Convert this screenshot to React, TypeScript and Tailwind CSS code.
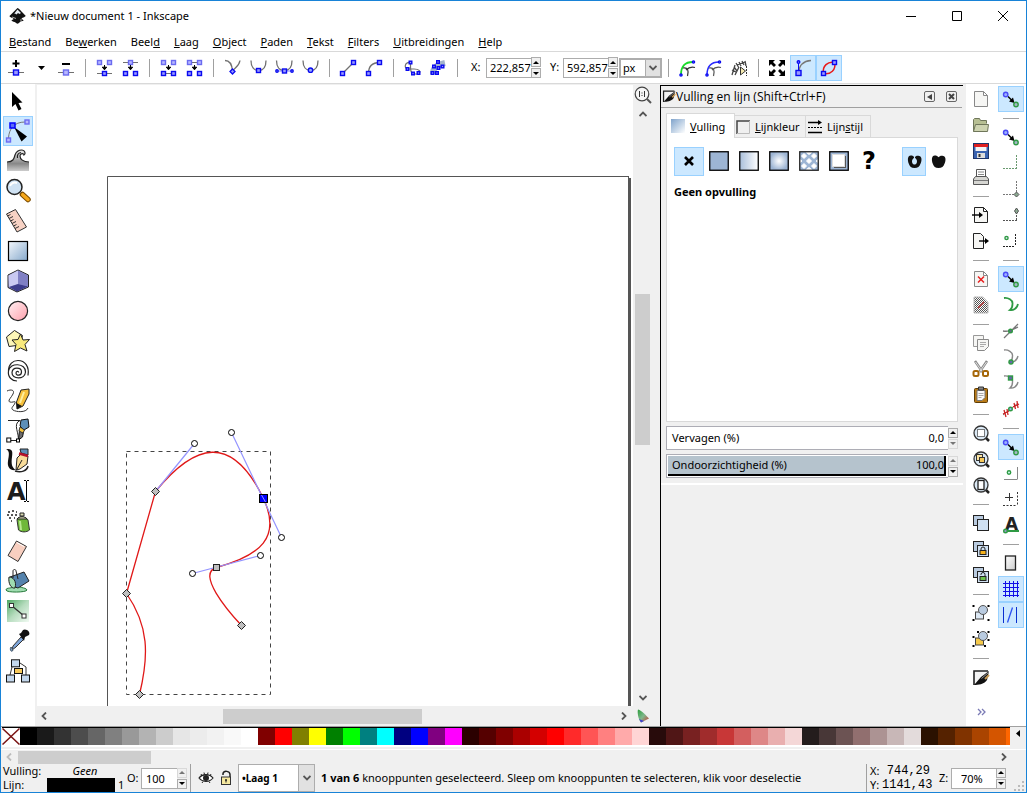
import React from "react";

type P = { children?: React.ReactNode };

const Svg = ({ children }: P) => (
  <svg width="24" height="24" viewBox="0 0 24 24" fill="none" aria-hidden="true" className="shrink-0 overflow-visible">
    {children}
  </svg>
);

const Node = ({ x, y, light, s = 4 }: { x: number; y: number; light?: boolean; s?: number }) => (
  <rect
    x={x - s / 2}
    y={y - s / 2}
    width={s}
    height={s}
    fill={light ? "#b8b8ff" : "#9a9aff"}
    stroke={light ? "#6b6bf0" : "#0a0af0"}
    strokeWidth="1.4"
  />
);

const Dot = ({ x, y, c = "#0a0af0", f = "#9ab0ff", r = 2.2 }: { x: number; y: number; c?: string; f?: string; r?: number }) => (
  <circle cx={x} cy={y} r={r} fill={f} stroke={c} strokeWidth="1.4" />
);

const G = "#2f9a44";
const gr = "#707070";

const Down = () => <path d="M12.5 9v4M10.3 11.2h4.4l-2.2 2.6z" stroke="#000" strokeWidth="1" fill="#000" />;

/* ---------- node-editing icons ---------- */

const edit = {
  add: (
    <Svg>
      <path d="M4 16.5h16" stroke={gr} />
      <path d="M12 4v7M8.5 7.5h7" stroke="#000" strokeWidth="2" />
      <Node x={12} y={16.5} s={5} />
    </Svg>
  ),
  remove: (
    <Svg>
      <path d="M4 16.5h16" stroke={gr} />
      <path d="M8 8h8" stroke="#000" strokeWidth="2" />
      <Node x={12} y={16.5} s={5} light />
    </Svg>
  ),
  join: (
    <Svg>
      <path d="M5 17.5h15" stroke={gr} />
      <Node x={7.5} y={6.5} light />
      <Node x={17.5} y={6.5} light />
      <Node x={12.5} y={17.5} />
      <Down />
    </Svg>
  ),
  breakPath: (
    <Svg>
      <path d="M5 6.5h15" stroke={gr} />
      <Node x={12.5} y={6.5} light />
      <Node x={7.5} y={17.5} />
      <Node x={17.5} y={17.5} />
      <Down />
    </Svg>
  ),
  joinSeg: (
    <Svg>
      <path d="M7.5 17.5h10" stroke={gr} />
      <Node x={7.5} y={6.5} light />
      <Node x={17.5} y={6.5} light />
      <Node x={7.5} y={17.5} />
      <Node x={17.5} y={17.5} />
      <Down />
    </Svg>
  ),
  delSeg: (
    <Svg>
      <path d="M7.5 6.5h10" stroke={gr} />
      <Node x={7.5} y={6.5} light />
      <Node x={17.5} y={6.5} light />
      <Node x={7.5} y={17.5} />
      <Node x={17.5} y={17.5} />
      <Down />
    </Svg>
  ),
  cusp: (
    <Svg>
      <path d="M5 4.5C10 4.5 12 9 12.5 15 14 12 19 11 20 4.5" stroke={gr} strokeWidth="1.3" />
      <path d="M12.5 13l2.5 2.5-2.5 2.5-2.5-2.5z" fill="#9a9aff" stroke="#0a0af0" strokeWidth="1.3" />
    </Svg>
  ),
  smooth: (
    <Svg>
      <path d="M5 4.5C5 11 8 14.5 12.5 14.5S20 11 20 4.5" stroke={gr} strokeWidth="1.3" />
      <Node x={12.5} y={14.5} />
    </Svg>
  ),
  symmetric: (
    <Svg>
      <path d="M4.5 4.5C4.5 10 7 14.5 12.5 14.5S20 10 20 4.5" stroke={gr} strokeWidth="1.3" />
      <path d="M5 15h15" stroke="#7a7aff" />
      <Node x={12.5} y={15} />
      <Dot x={5} y={15} r={1.2} />
      <Dot x={20} y={15} r={1.2} />
    </Svg>
  ),
  auto: (
    <Svg>
      <path d="M5 4.5C5 11 8 14.5 12.5 14.5S20 11 20 4.5" stroke={gr} strokeWidth="1.3" />
      <Dot x={12.5} y={14.2} />
    </Svg>
  ),
  line: (
    <Svg>
      <path d="M6.5 17.5l11-11" stroke={gr} strokeWidth="1.3" />
      <Node x={6.5} y={17.5} />
      <Node x={17.5} y={6.5} />
    </Svg>
  ),
  curve: (
    <Svg>
      <path d="M6.5 17.5c0-7 4-11 11-11" stroke={gr} strokeWidth="1.3" />
      <Node x={6.5} y={17.5} />
      <Node x={17.5} y={6.5} />
    </Svg>
  ),
  objToPath: (
    <Svg>
      <path d="M10.5 6.5C4 6 4 13 8 13h6c5 0 7 2 5 5h-4c-5 0-4.5-5-4.5-11.5z" stroke={gr} strokeWidth="1.2" />
      <Node x={10.5} y={6.5} s={2.6} />
      <Node x={7.5} y={13} s={2.6} />
      <Node x={13} y={17.5} s={2.6} />
      <Node x={18.5} y={17} s={2.6} />
    </Svg>
  ),
  strokeToPath: (
    <Svg>
      <path d="M7 18c0-6 3-9 12-11" stroke="#a3b4cc" strokeWidth="6" />
      <Node x={12} y={6} s={2.6} />
      <Node x={8} y={10.5} s={2.6} />
      <Node x={6.5} y={17} s={2.6} />
      <Node x={11} y={17} s={2.6} />
      <Node x={12.5} y={12} s={2.6} />
      <Node x={16.5} y={10.5} s={2.6} />
    </Svg>
  ),
  next: (
    <Svg>
      <path d="M6 19C6 10 10 6 18 6" stroke="#1bdc2b" strokeWidth="1.8" />
      <path d="M8 12c5-1 6 3 4.5 8M11 14c3-3 5-3.5 9-2.5" stroke="#333" strokeWidth="1.2" />
      <Dot x={6} y={19} r={1.1} />
      <Dot x={18.5} y={6} r={1.1} />
    </Svg>
  ),
  outline: (
    <Svg>
      <path d="M6 19C6 10 10 6 18 6" stroke="#2a2aff" strokeWidth="1.5" />
      <path d="M8 12c5-1 6 3 4.5 8M11 14c3-3 5-3.5 9-2.5" stroke="#555" strokeWidth="1.2" />
      <Dot x={6} y={19} r={1.1} />
      <Dot x={18.5} y={6} r={1.1} />
    </Svg>
  ),
  mask: (
    <Svg>
      <path d="M5 19l3-10M7 11l3 4M9 7l3 5M12 6l2 4M15 5l2 4M8 19l4-8M18 5l1 5M5 14l4 2M10 9l8-3" stroke="#444" strokeWidth="1.3" />
      <path d="M13.5 11v8l5-4z" fill="#f3e8b0" stroke="#333" />
      <path d="M19.5 10v10" stroke="#333" strokeDasharray="2 1" />
    </Svg>
  ),
  transform: (
    <Svg>
      <path
        d="M4 4h6L8 6l3 3-2 2-3-3-2 2zM20 4h-6l2 2-3 3 2 2 3-3 2 2zM4 20h6l-2-2 3-3-2-2-3 3-2-2zM20 20h-6l2-2-3-3 2-2 3 3 2-2z"
        fill="#000"
      />
    </Svg>
  ),
  handles: (
    <Svg>
      <path d="M7.5 17C8 10 12 5 20 4.5" stroke="#777" strokeWidth="1.3" />
      <path d="M7.5 17V6" stroke="#0a0af0" />
      <Dot x={7.5} y={6} r={1.3} />
      <Node x={7.5} y={17} s={5} />
    </Svg>
  ),
  pathOutline: (
    <Svg>
      <path d="M6.5 17.5C5 10 11 5 17.5 6.5c2 7-4 12.5-11 11z" stroke="#e81a1a" strokeWidth="1.5" />
      <Node x={6.5} y={17.5} />
      <Node x={17.5} y={6.5} />
    </Svg>
  ),
};

/* ---------- toolbox ---------- */

const toolbox: [string, React.ReactNode][] = [
  ["Selecteren", <Svg><path d="M6 3v15l3.5-3 3 6.5 3-1.5-3-6 4-.5z" fill="#000" /></Svg>],
  [
    "Knooppunten",
    <Svg>
      <path d="M2.5 19C3 10 8 3 19 3" stroke="#777" />
      <path d="M8 8l13 9.5-5.5 5z" fill="#000" />
      <Node x={2.5} y={21} light />
      <Node x={21} y={3} light />
      <rect x="4" y="4" width="5" height="5" fill="#5b6cf5" stroke="#00f" strokeWidth="1.5" />
    </Svg>,
  ],
  [
    "Boetseren",
    <Svg>
      <defs>
        <linearGradient id="wave" x1="0" y1="0" x2="0" y2="1">
          <stop stopColor="#eee" />
          <stop offset=".65" stopColor="#888" />
          <stop offset="1" stopColor="#ccc" />
        </linearGradient>
      </defs>
      <path d="M1 22v-9c6 0 7-3 8-7 1-3 4-5 7-5 3 0 4 3 2 5-1-2-4-1-4 1 0 3 3 6 9 6v9z" fill="url(#wave)" />
      <path d="M1 13c6 0 7-3 8-7 1-3 4-5 7-5s4 4 2 5c0-2-4-2-4 1 0 3 3 6 9 6M11.5 9c-.5-3 1-5 3.5-5.5" stroke="#222" strokeWidth="1.2" />
    </Svg>,
  ],
  [
    "Zoomen",
    <Svg>
      <path d="M14.5 14l2.5 2.5" stroke="#888" strokeWidth="3" />
      <path d="M16.5 15.5L22 20.5" stroke="#7a4b00" strokeWidth="5.5" strokeLinecap="round" />
      <path d="M16.7 15.7L22 20.5" stroke="#f5a81c" strokeWidth="3.5" strokeLinecap="round" />
      <circle cx="8.5" cy="8" r="7.5" fill="#cfe2f3" stroke="#222" strokeWidth="1.5" />
      <path d="M4 7c1-3 4-4 7-3" stroke="#fff" strokeWidth="2" />
    </Svg>,
  ],
  [
    "Meten",
    <Svg>
      <path d="M.5 5l9-4.5L20.5 18l-9.5 5z" fill="#f7d2c4" stroke="#333" />
      <path d="M1.5 7l3-1.5M3 9.5l4-2M4.5 12l3-1.5M6 14.5l4-2M7.5 17l3-1.5M9 19.5l4-2" stroke="#333" />
    </Svg>,
  ],
  [
    "Rechthoek",
    <Svg>
      <defs>
        <linearGradient id="bl" x1="0" y1="0" x2="1" y2="1">
          <stop stopColor="#f4f8fc" />
          <stop offset="1" stopColor="#86a9cc" />
        </linearGradient>
      </defs>
      <rect x="2.5" y="2.5" width="19" height="19" fill="url(#bl)" stroke="#000" strokeWidth="1.2" />
    </Svg>,
  ],
  [
    "3D-kubus",
    <Svg>
      <path d="M2 6L12 1l10.5 5V18L11 23 2 18.5z" fill="#9a9ad6" stroke="#222" />
      <path d="M2.5 6.5L12 1.5V15l-9 3z" fill="#c9c9f2" />
      <path d="M12 1.5L22 6.5V17.5L12 15z" fill="#8080c4" />
      <path d="M3 18l9-3 10 2.5L11 22.5z" fill="#3c3c8c" />
    </Svg>,
  ],
  [
    "Cirkel",
    <Svg>
      <defs>
        <linearGradient id="pk" x1="0" y1="0" x2="1" y2="1">
          <stop stopColor="#fff1f3" />
          <stop offset="1" stopColor="#ffa0ac" />
        </linearGradient>
      </defs>
      <circle cx="12" cy="12" r="9.6" fill="url(#pk)" stroke="#222" strokeWidth="1.2" />
    </Svg>,
  ],
  [
    "Ster",
    <Svg>
      <path d="M.5 8l8-6.5 8 5L14 16l-11 1.5z" fill="#fdf6b8" stroke="#222" />
      <path d="M14.5 5l2.5 6 6.5-.5-4.5 5 2 6.5-6.5-3-6 3.5 1.500-7-4-4.500 6-.5z" fill="#f9ea7c" stroke="#222" />
    </Svg>,
  ],
  [
    "Spiraal",
    <Svg>
      <path
        d="M12.5 13.5c.5-1.500-2.500-1.500-2.500.5 0 3 5.500 3 5.500-1 0-5-9-5.500-9.500.5-.5 7 13 7.500 13.500-.5C20 4 4 3 2.500 12 1.500 18 6 22 11 22M2.500 12C2.500 5 7 1.500 12 1.500c7 0 11.500 6 10 15"
        stroke="#222"
        strokeWidth="1.2"
      />
    </Svg>,
  ],
  [
    "Potlood",
    <Svg>
      <path d="M1 2c4-2 8-1 6 3S1 12 4 13s6-2 5 1-5 5-2 7 13 3 15-2" stroke="#333" />
      <path d="M11 20l-.5-7L15 1l8-1v5l-6 12z" fill="#f7c13c" stroke="#222" />
      <path d="M14 14L18 3" stroke="#fff0a0" strokeWidth="2" />
      <path d="M11 20l-.5-6 5.500 3z" fill="#111" />
    </Svg>,
  ],
  [
    "Bezier",
    <Svg>
      <path d="M2 1.5h12C6 5 14 15 12 21.5H3" stroke="#222" />
      <path d="M15 1l7-1 1 8-5 3-4-4z" fill="#5d8fb8" stroke="#111" />
      <path d="M13.5 11l4 2-1 5-4 3z" fill="#6b6b6b" stroke="#111" />
      <path d="M14 8l4.5 3-1.500 3-4-2z" fill="#f5c33b" stroke="#333" />
      <rect x=".8" y="19" width="4" height="4" fill="#fff" stroke="#000" />
      <rect x="10.5" y="20" width="3" height="3" fill="#fff" stroke="#000" />
    </Svg>,
  ],
  [
    "Kalligrafie",
    <Svg>
      <path d="M0 0c6 0 7 1 6 8s0 11 4 13c-6 1-9-3-8-9S4 2 0 0z" fill="#111" />
      <path d="M9 22c6 2 12 0 13-5" stroke="#222" strokeWidth="1.5" />
      <path d="M10 21l1-12 4-4 7 2-1 8-7 5z" fill="#f8dc9a" stroke="#222" />
      <path d="M10.5 21L16 11" stroke="#222" />
      <path d="M14 0h8v6l-7-2z" fill="#5d8fb8" stroke="#222" />
      <path d="M13 4.5l9 2.5" stroke="#b3122b" strokeWidth="2.5" />
    </Svg>,
  ],
  [
    "Tekst",
    <Svg>
      <text x="1" y="21" fontFamily="DejaVu Sans" fontWeight="700" fontSize="24" fill="#1c1c1c">A</text>
      <path d="M20.5 2v20M18 1.5h2M21 1.5h2M18 22.5h2M21 22.5h2" stroke="#000" />
    </Svg>,
  ],
  [
    "Spuitbus",
    <Svg>
      <path d="M2 3h2M6 2h2M10 3h1M1 6h2M5 6h2M9 6h2M3 9h2M8 9h1M5 12h1" stroke="#222" strokeWidth="1.5" />
      <path d="M11 11c0-4 9-4 11 0l1.5 10c-3 2.5-8 2.5-11 0z" fill="#6fb83a" stroke="#333" />
      <path d="M14 12l1 9" stroke="#b8e890" strokeWidth="2" />
      <path d="M11 10c2-3 8-3 10 0zM14 4h4v3h-4z" fill="#d8d8b0" stroke="#222" />
    </Svg>,
  ],
  [
    "Gom",
    <Svg>
      <path d="M10.5 2l10 5.5L12 22.5 2 16.5z" fill="#f8cfc0" stroke="#333" />
      <path d="M10.8 3.5L18 7.5" stroke="#fff" />
    </Svg>,
  ],
  [
    "Vullen",
    <Svg>
      <path d="M0 21c0-3 7-1 8-4l4-1c-1 3 8 2 9 5 0 2.5-21 3-21 0z" fill="#9fdcb0" stroke="#287a3c" />
      <path d="M4 8l14-5 5 9-11 7-6-2z" fill="#5583ad" stroke="#222" />
      <path d="M3 8c4 0 8 4 6 11-4 1-7-5-6-11z" fill="#9fdcb0" stroke="#222" />
      <path d="M7 9V2c0-2 3-2 3 0l2 8" stroke="#222" />
    </Svg>,
  ],
  [
    "Kleurverloop",
    <Svg>
      <defs>
        <linearGradient id="gn" x1="0" y1="0" x2="1" y2="1">
          <stop stopColor="#4ea862" />
          <stop offset=".5" stopColor="#b6dcbe" />
          <stop offset="1" stopColor="#f0faf2" />
        </linearGradient>
      </defs>
      <rect x="1" y="1" width="22" height="22" fill="url(#gn)" />
      <path d="M5.5 6.5l12 10" stroke="#333" strokeWidth="1.3" />
      <rect x="3.5" y="4.5" width="4" height="4" fill="#fff" stroke="#333" />
      <rect x="16" y="15" width="4" height="4" fill="#fff" stroke="#333" />
    </Svg>,
  ],
  [
    "Pipet",
    <Svg>
      <path d="M15 8L7 17l-1 4 4-3 8-8z" fill="#7da4d8" stroke="#333" />
      <path d="M13 5l2-1 2-3c3-2 8 2 6 5l-4 2-1 4z" fill="#111" />
      <path d="M5 18c-2 3 1 6 2 3z" fill="#86a9cc" stroke="#456" />
    </Svg>,
  ],
  [
    "Verbinden",
    <Svg>
      <path d="M6 8L4 16M14 4l6 4v8" stroke="#333" />
      <rect x="5.5" y=".8" width="8" height="7" fill="#c3d7ec" stroke="#111" />
      <rect x=".5" y="16" width="8" height="7" fill="#c3d7ec" stroke="#111" />
      <rect x="15.5" y="16" width="8" height="7" fill="#c3d7ec" stroke="#111" />
      <rect x="8.5" y="9.5" width="8" height="5" fill="#f7c95a" stroke="#111" />
    </Svg>,
  ],
];

/* ---------- command bar ---------- */

const Doc = ({ c = "#888", f = "#f6f6f4" }: { c?: string; f?: string }) => (
  <path d="M5.5 4.5h9l4 4v11h-13zM14.5 4.5v4h4" fill={f} stroke={c} />
);
const Lens = ({ children }: P) => (
  <Svg>
    <path d="M16 16l4 4" stroke="#222" strokeWidth="2.5" />
    <circle cx="12" cy="12" r="7" fill="#dbe9f5" stroke="#333" strokeWidth="1.3" />
    {children}
  </Svg>
);
const Two = ({ children }: P) => (
  <Svg>
    <rect x="4.5" y="4.5" width="10" height="10" fill="#b9cbe0" stroke="#222" />
    <rect x="8.5" y="8.5" width="11" height="11" fill="#cfe0f2" stroke="#222" />
    {children}
  </Svg>
);

const FillGlyph = () => (
  <>
    <path d="M5 6h14L5 19z" fill="#f4f4f4" />
    <path d="M5 20V6h14" stroke="#222" strokeWidth="1.6" />
    <path d="M20 6L12 12 5 20c4 0 10-.5 13-5z" fill="#111" />
    <path d="M12.5 13.5l7-6" stroke="#999" />
    <path d="M16 14l4-4" stroke="#c79a55" strokeWidth="2" />
  </>
);

const commands: ([string, React.ReactNode] | null)[] = [
  ["Nieuw", <Svg><Doc /></Svg>],
  [
    "Openen",
    <Svg>
      <path d="M4.5 18.5v-12l1-1h5l1 2h6v3" fill="#b7bf93" stroke="#6f765a" />
      <path d="M4.5 18.5h14l1-7h-13z" fill="#cdd3b0" stroke="#6f765a" />
    </Svg>,
  ],
  [
    "Opslaan",
    <Svg>
      <rect x="4.5" y="4.5" width="15" height="15" fill="#3a63b0" stroke="#1e3468" />
      <path d="M5 5h14v3H5z" fill="#e02020" />
      <path d="M6.5 8h11v4h-11z" fill="#f4f4f4" />
      <path d="M8 14h8v5H8z" fill="#ddd" />
      <path d="M9.5 15h2v3h-2z" fill="#333" />
    </Svg>,
  ],
  [
    "Afdrukken",
    <Svg>
      <path d="M7.5 12V4.5h9V12" fill="#fff" stroke="#555" />
      <path d="M9 7h6M9 9.5h6" stroke="#888" />
      <path d="M4.5 19.5V14l2-2.5h11l2 2.5v5.5z" fill="#d6d6d2" stroke="#555" />
      <path d="M5 15.5h14" stroke="#777" />
    </Svg>,
  ],
  null,
  ["Importeren", <Svg><Doc c="#222" /><path d="M3 12h8" stroke="#000" strokeWidth="1.4" /><path d="M10 9l4 3-4 3z" fill="#000" /></Svg>],
  ["Exporteren", <Svg><path d="M4.5 4.5h7l3 3v12h-10z" fill="#f6f6f4" stroke="#222" /><path d="M10 12h7" stroke="#000" strokeWidth="1.4" /><path d="M16 9l4 3-4 3z" fill="#000" /></Svg>],
  null,
  ["Ongedaan maken", <Svg><Doc /><path d="M9 9.5l6 6M15 9.5l-6 6" stroke="#e82020" strokeWidth="1.5" /></Svg>],
  [
    "Opnieuw",
    <Svg>
      <defs>
        <pattern id="chk" width="2" height="2" patternUnits="userSpaceOnUse">
          <path d="M0 0h1v1H0zM1 1h1v1H1z" fill="#555" />
        </pattern>
      </defs>
      <path d="M5 4h9l5 5v11H5z" fill="url(#chk)" stroke="#bbb" />
      <path d="M9 15l6-6" stroke="#c44" strokeWidth="1.3" />
    </Svg>,
  ],
  null,
  [
    "Kopiëren",
    <Svg>
      <path d="M4.5 4.5h10v11h-10z" fill="#f6f6f4" stroke="#999" />
      <path d="M8.5 8.5h11v7l-4 4h-7z" fill="#f6f6f4" stroke="#888" />
      <path d="M11 11.5h6M11 13.5h6M11 15.5h4" stroke="#aaa" />
    </Svg>,
  ],
  [
    "Knippen",
    <Svg>
      <path d="M6 4l7.5 11M18 4l-7.5 11" stroke="#888" strokeWidth="2.5" />
      <path d="M6.5 5l7 10M17.5 5l-7 10" stroke="#ddd" />
      <rect x="4.5" y="14" width="5" height="5" rx="1.5" stroke="#a5670a" strokeWidth="2" />
      <rect x="14" y="14" width="5" height="5" rx="1.5" stroke="#a5670a" strokeWidth="2" />
    </Svg>,
  ],
  [
    "Plakken",
    <Svg>
      <rect x="5.5" y="5.5" width="13" height="14" rx="1" fill="#b97a16" stroke="#5d3c06" />
      <path d="M8 7.5h8v7l-3 3H8z" fill="#fafafa" stroke="#777" />
      <path d="M9.5 4h5v3h-5z" fill="#888" stroke="#333" />
      <path d="M9.5 10.5h5M9.5 12.5h5M9.5 14.5h3" stroke="#aaa" />
    </Svg>,
  ],
  null,
  ["Zoom selectie", <Lens><rect x="8.5" y="8.5" width="7" height="7" fill="#fff" stroke="#000" strokeDasharray="1 1" /></Lens>],
  ["Zoom tekening", <Lens><rect x="7.5" y="7.5" width="6" height="6" fill="#fbe3a0" stroke="#333" /><rect x="10.5" y="10.5" width="5" height="5" fill="#f7c95a" stroke="#333" /></Lens>],
  ["Zoom pagina", <Lens><rect x="9" y="7.5" width="6" height="9" fill="#fff" stroke="#222" strokeWidth="1.3" /></Lens>],
  null,
  ["Dupliceren", <Two />],
  ["Klonen", <Two><path d="M12 13.5V12a2 2 0 0 1 4 0v1.5" stroke="#222" /><rect x="11" y="13.5" width="6" height="4" fill="#f5b21c" stroke="#222" /></Two>],
  ["Ontklonen", <Two><path d="M12 12v-.5a2 2 0 0 1 4 0v2" stroke="#222" /><rect x="11" y="13.5" width="6" height="4" fill="#6cc04a" stroke="#222" /></Two>],
  null,
  [
    "Groeperen",
    <Svg>
      <path d="M3.5 4h2v2h-2zM18.5 4h2v2h-2zM3.5 18h2v2h-2zM18.5 18h2v2h-2z" fill="#000" />
      <rect x="6.5" y="11" width="8" height="7" fill="#dce8f4" stroke="#444" />
      <circle cx="14" cy="9" r="4.5" fill="#b9cbe0" stroke="#555" />
    </Svg>,
  ],
  [
    "Degroeperen",
    <Svg>
      <rect x="6.5" y="11" width="8" height="7" fill="#f5c94a" stroke="#444" />
      <circle cx="14" cy="9" r="4.5" fill="#b9cbe0" stroke="#555" />
      <path d="M3.5 9h2v2h-2zM18.5 4h2v2h-2zM3.5 18h2v2h-2zM18.5 12h2v2h-2zM8 4h2v2H8zM15 18h2v2h-2z" fill="#000" />
    </Svg>,
  ],
  null,
  ["Vulling en lijn", <Svg><FillGlyph /></Svg>],
];

/* ---------- snap bar ---------- */

const Link = () => (
  <Svg>
    <path d="M9 9.5l4 4" stroke="#000" strokeWidth="1.5" />
    <path d="M15.5 16l-5.5-1.5 4-4z" fill="#000" />
    <Dot x={6.7} y={7.5} c="#4a4af5" />
    <Dot x={17} y={17.5} c={G} f="#a5b8c8" />
  </Svg>
);
const ARC = "M5 5c4-.5 9 2 8.5 6 0 3-1 5-2.5 6 3 .5 7-1 8-6";
const Arc = () => <path d={ARC} stroke="#888" strokeWidth="1.4" />;

const snaps: ([string, React.ReactNode, boolean?] | null)[] = [
  ["Kleven", <Link />, true],
  null,
  ["Omvattend vak", <Link />],
  ["Randen", <Svg><path d="M4 17.5h14M17.5 4v13" stroke="#6a9a70" strokeDasharray="2 1" /></Svg>],
  ["Hoeken", <Svg><path d="M4 17.5h14M17.5 4v13" stroke="#777" strokeDasharray="2 1" /><path d="M17.5 15l2.5 2.5-2.5 2.5-2.5-2.5z" fill="#8aa890" stroke="#555" /></Svg>],
  ["Randmidden", <Svg><path d="M4 17.5h14M17.5 6v11" stroke="#555" strokeDasharray="2 1" /><path d="M17.5 5l2 3-2 3-2-3z" fill="#8aa890" stroke="#555" /></Svg>],
  ["Middelpunt", <Svg><path d="M4 17.5h12M16.5 5v12" stroke="#222" strokeDasharray="2 1" /><Dot x={7.5} y={9} c={G} f="#cdd" r={1.6} /></Svg>],
  null,
  ["Knooppunten", <Link />, true],
  ["Paden", <Svg><path d={ARC} stroke={G} strokeWidth="1.8" /></Svg>],
  ["Snijpunten", <Svg><path d="M5 19L19 5M4 12c6 1 9-1 15-4" stroke="#777" strokeWidth="1.3" /><Dot x={11.5} y={12} c={G} f="#668" r={1.8} /></Svg>],
  ["Hoekknooppunten", <Svg><Arc /><Dot x={12} y={17} c={G} f="#66a" r={2} /></Svg>],
  ["Afgevlakt", <Svg><Arc /><rect x="9.5" y="5" width="4" height="4" fill="#66a" stroke={G} strokeWidth="1.4" /></Svg>],
  ["Lijnmiddens", <Svg><path d="M4 18l15-12" stroke="#777" /><path d="M5 13l2 7M8 12l1 6M15 6l1.5 6M18 4l1 7M4 17l6-3M14 10l6-3" stroke="#c22" strokeWidth="1.3" /><Dot x={11.5} y={12} c={G} r={1.8} /></Svg>],
  null,
  ["Andere", <Link />, true],
  ["Objectmidden", <Svg><path d="M5 18.5h13M18.5 6v12.5" stroke="#888" /><Dot x={10} y={11.5} c={G} f="#cfe" r={1.7} /></Svg>],
  ["Draaipunt", <Svg><path d="M6 10.5h8M10.5 6v8" stroke="#333" /><path d="M4 18.5h13M18.5 5v13" stroke="#333" strokeDasharray="2 1.5" /></Svg>],
  [
    "Tekstbasislijn",
    <Svg>
      <path d="M6 18h14" stroke={G} strokeWidth="2" />
      <text x="6" y="17" fontFamily="DejaVu Sans" fontWeight="700" fontSize="17" fill="#222">A</text>
      <Dot x={6.5} y={18} c={G} f="#99c" r={1.8} />
    </Svg>,
  ],
  null,
  [
    "Pagina",
    <Svg>
      <defs>
        <linearGradient id="pg" x1="0" y1="0" x2="1" y2="1">
          <stop stopColor="#fff" />
          <stop offset="1" stopColor="#ccc" />
        </linearGradient>
      </defs>
      <rect x="6.5" y="5" width="10" height="14" fill="url(#pg)" stroke="#222" strokeWidth="1.3" />
    </Svg>,
  ],
  ["Raster", <Svg><path d="M6.5 4v16M10.5 4v16M14.5 4v16M18.5 4v16M4 6.5h16M4 10.5h16M4 14.5h16M4 18.5h16" stroke="#1010e8" /></Svg>, true],
  ["Hulplijnen", <Svg><path d="M4.5 4v16M17.5 4v16" stroke="#0a2fd0" /><path d="M8.5 19.5l5-15" stroke="#2a4ff0" strokeWidth="1.3" /></Svg>, true],
];

const swatches =
  "#000000 #1a1a1a #333333 #4d4d4d #666666 #808080 #999999 #b3b3b3 #cccccc #e6e6e6 #ececec #f2f2f2 #f9f9f9 #ffffff #800000 #ff0000 #808000 #ffff00 #008000 #00ff00 #008080 #00ffff #000080 #0000ff #800080 #ff00ff #2b0000 #550000 #800000 #aa0000 #d40000 #ff0000 #ff2a2a #ff5555 #ff8080 #ffaaaa #ffd5d5 #280b0b #501616 #782121 #a02c2c #c83737 #d35f5f #de8787 #e9afaf #f4d7d7 #241c1c #483737 #6c5353 #916f6f #ac9393 #c8b7b7 #e3dbdb #2b1100 #552200 #803300 #aa4400 #d45500 #ff6600".split(" ");

const menus: [string, string, string][] = [
  ["", "B", "estand"],
  ["Be", "w", "erken"],
  ["Beel", "d", ""],
  ["", "L", "aag"],
  ["", "O", "bject"],
  ["", "P", "aden"],
  ["", "T", "ekst"],
  ["", "F", "ilters"],
  ["", "U", "itbreidingen"],
  ["", "H", "elp"],
];

const Tri = ({ up, dim, big }: { up?: boolean; dim?: boolean; big?: boolean }) => (
  <svg width={big ? 7 : 6} height={big ? 4 : 3} viewBox="0 0 6 3" preserveAspectRatio="none" aria-hidden="true">
    <path d={up ? "M3 0l3 3H0z" : "M0 0h6L3 3z"} fill={dim ? "#777" : "#000"} />
  </svg>
);

const Spin = ({ dimUp, dimDown }: { dimUp?: boolean; dimDown?: boolean }) => (
  <span className="flex w-[10px] shrink-0 flex-col gap-px">
    <button aria-label="Verhogen" className={`flex h-[10px] items-center justify-center border bg-[#f0f0f0] ${dimUp ? "border-[#d9d9d9]" : "border-[#adadad]"}`}>
      <Tri up dim={dimUp} />
    </button>
    <button aria-label="Verlagen" className={`flex h-[10px] items-center justify-center border bg-[#f0f0f0] ${dimDown ? "border-[#d9d9d9]" : "border-[#adadad]"}`}>
      <Tri dim={dimDown} />
    </button>
  </span>
);

const Chevron = ({ d, dim }: { d: string; dim?: boolean }) => (
  <svg width="8" height="8" viewBox="0 0 8 8" fill="none" aria-hidden="true">
    <path d={d} stroke={dim ? "#bbb" : "#555"} strokeWidth="1.8" />
  </svg>
);
const UP = "M.5 6L4 2.5 7.5 6";
const DOWN = "M.5 2L4 5.5 7.5 2";
const LEFT = "M6 .5L2.5 4 6 7.5";
const RIGHT = "M2 .5L5.5 4 2 7.5";

const Tool = ({ label, on, children }: { label: string; on?: boolean; children: React.ReactNode }) => (
  <button aria-label={label} className={`flex h-[26px] w-[26px] shrink-0 items-center justify-center border ${on ? "border-[#99d1ff] bg-[#cce8ff]" : "border-transparent"}`}>
    {children}
  </button>
);
const VSep = () => (
  <span className="flex w-3 shrink-0 justify-center"><span className="h-[18px] w-px bg-[#a0a0a0]" /></span>
);
const HSep = () => (
  <span className="flex h-3 shrink-0 flex-col items-center justify-center"><span className="h-px w-4 bg-[#a0a0a0]" /></span>
);

const Pt = ({ x, y }: { x: number; y: number }) => (
  <circle cx={x} cy={y} r="3" fill="#fff" stroke="#000" />
);
const Dia = ({ x, y }: { x: number; y: number }) => (
  <path d={`M${x} ${y - 4}l4 4-4 4-4-4z`} fill="#bfbfbf" stroke="#222" />
);

const Canvas = () => (
  <div className="relative min-w-0 flex-1 overflow-hidden bg-white">
    <svg width="100%" height="100%" className="absolute inset-0" role="img" aria-label="Tekening">
      <g transform="translate(-37 -85)" fill="none">
        <path d="M107.5 900V176.5H628.5" stroke="#555" />
        <path d="M629.5 178V900" stroke="#555" strokeWidth="3" />
        <path d="M628.5 176v3" stroke="#555" />
        <rect x="126.5" y="451.5" width="144" height="243" stroke="#444" strokeDasharray="4 4" />
        <path
          d="M139.5 694.5C149 655 149 626 126.5 593.5L155.5 491.5C194.5 443.5 231.5 432.5 263.5 498.5C281.5 537.5 260.5 555.5 216.5 567.5C196 573.5 228 611 241.5 625.5"
          stroke="#e01818"
          strokeWidth="1.3"
        />
        <path d="M155.5 491.5L194.5 443.5M231.5 432.5L281.5 537.5M192.5 573.5L260.5 555.5" stroke="#9494ff" strokeWidth="1.2" />
        <Pt x={194.5} y={443.5} />
        <Pt x={231.5} y={432.5} />
        <Pt x={281.5} y={537.5} />
        <Pt x={192.5} y={573.5} />
        <Pt x={260.5} y={555.5} />
        <Dia x={155.5} y={491.5} />
        <Dia x={126.5} y={593.5} />
        <Dia x={139.5} y={694.5} />
        <Dia x={241.5} y={625.5} />
        <rect x="213.5" y="564.5" width="6" height="6" fill="#bfbfbf" stroke="#222" />
        <rect x="259.5" y="494.5" width="8" height="8" fill="#00f" stroke="#000" />
        <path d="M261.5 495l4 7" stroke="#9494ff" />
      </g>
    </svg>
  </div>
);

const Swatch = ({ label, children }: { label: string; children: React.ReactNode }) => (
  <button aria-label={label} className="flex h-[30px] w-[30px] items-center justify-center">
    <svg width="20" height="20" viewBox="0 0 20 20" aria-hidden="true">{children}</svg>
  </button>
);

const lobes =
  "M4 1c2 0 3 .5 4 2 1-1.500 3-2 5-1.500 3 .5 3 5 1.500 8-1 3-3 5-6.500 5S3 12.500 1.800 9.500C.5 6 .5 1 4 1z";

const Panel = () => (
  <aside className="mt-px flex w-[303px] shrink-0 flex-col border-l border-t border-l-black border-t-black bg-[#f0f0f0]">
    <header className="mr-px flex h-[22px] items-center border-b border-[#a0a0a0] pl-px">
      <svg width="14" height="15" viewBox="3 5 18 16" fill="none" aria-hidden="true"><FillGlyph /></svg>
      <h2 className="flex-1 font-['Open_Sans'] text-[12px]">Vulling en lijn (Shift+Ctrl+F)</h2>
      <button aria-label="Verkleinen" className="mr-[11px] flex h-[11px] w-[11px] items-center justify-center rounded-[2px] border border-[#666]">
        <svg width="5" height="6" viewBox="0 0 5 6"><path d="M5 0v6L0 3z" fill="#444" /></svg>
      </button>
      <button aria-label="Paneel sluiten" className="mr-[5px] flex h-[11px] w-[11px] items-center justify-center rounded-[2px] border border-[#666]">
        <svg width="7" height="7" viewBox="0 0 7 7"><path d="M1 1l5 5M6 1L1 6" stroke="#444" strokeWidth="2" /></svg>
      </button>
    </header>
    <div className="flex flex-col border-b-2 border-white px-[5px] pb-[5px] pt-[5px]">
      <div role="tablist" className="flex items-end">
        <button role="tab" aria-selected="true" className="z-10 -mb-px flex h-[25px] w-[69px] items-center gap-[5px] border border-b-0 border-[#d9d9d9] bg-white pl-1">
          <svg width="14" height="14" aria-hidden="true">
            <defs>
              <linearGradient id="t1" x1="0" y1="0" x2="1" y2="1">
                <stop stopColor="#7fa3cb" />
                <stop offset="1" stopColor="#fff" />
              </linearGradient>
            </defs>
            <rect width="14" height="14" fill="url(#t1)" />
          </svg>
          <span className="pt-[2px]"><u>V</u>ulling</span>
        </button>
        <button role="tab" aria-selected="false" className="flex h-[22px] w-[71px] items-center gap-[5px] border border-b-0 border-l-0 border-[#d9d9d9] pl-px">
          <svg width="14" height="14" aria-hidden="true">
            <path d="M1 14V1h13" stroke="#444" strokeWidth="1.5" fill="none" />
            <path d="M13.5 1v12.5H1" stroke="#bbb" fill="none" />
          </svg>
          <span className="pt-[2px]"><u>L</u>ijnkleur</span>
        </button>
        <button role="tab" aria-selected="false" className="flex h-[22px] w-[65px] items-center gap-[5px] border border-b-0 border-l-0 border-[#d9d9d9] pl-[2px]">
          <svg width="14" height="14" fill="none" aria-hidden="true">
            <path d="M0 2.5h10M0 12.5h14" stroke="#000" strokeWidth="1.5" />
            <path d="M10 0l4 2.5L10 5z" fill="#000" />
            <path d="M0 7.5h14" stroke="#000" strokeDasharray="2 1" />
          </svg>
          <span className="pt-[2px]">Lijn<u>s</u>tijl</span>
        </button>
      </div>
      <div role="tabpanel" className="h-[285px] border border-[#d9d9d9] bg-white px-[7px] pt-2">
        <div className="flex items-center">
          <button aria-label="Geen" className="flex h-[29px] w-[30px] items-center justify-center border border-[#99d1ff] bg-[#cce8ff]">
            <svg width="12" height="12" viewBox="0 0 12 12"><path d="M2 2l8 8M10 2l-8 8" stroke="#000" strokeWidth="2.6" /></svg>
          </button>
          <Swatch label="Egale kleur"><rect x=".75" y=".75" width="18.5" height="18.5" fill="#9db5d4" stroke="#000" strokeWidth="1.3" /></Swatch>
          <Swatch label="Lineair kleurverloop">
            <defs>
              <linearGradient id="f1" x1="0" y1="0" x2="1" y2="0">
                <stop stopColor="#a9bfdb" />
                <stop offset="1" stopColor="#fff" />
              </linearGradient>
            </defs>
            <rect x=".75" y=".75" width="18.5" height="18.5" fill="url(#f1)" stroke="#000" strokeWidth="1.3" />
          </Swatch>
          <Swatch label="Radiaal kleurverloop">
            <defs>
              <radialGradient id="f2">
                <stop stopColor="#fff" />
                <stop offset="1" stopColor="#9db5d4" />
              </radialGradient>
            </defs>
            <rect x=".75" y=".75" width="18.5" height="18.5" fill="url(#f2)" stroke="#000" strokeWidth="1.3" />
          </Swatch>
          <Swatch label="Patroon">
            <rect x=".75" y=".75" width="18.5" height="18.5" fill="#9db5d4" />
            <path
              d="M5 2.500l2.500 2.500L5 7.500 2.500 5zM15 2.500l2.500 2.500-2.500 2.500-2.500-2.500zM10 7.500l2.500 2.500-2.500 2.500L7.500 10zM5 12.500l2.500 2.500L5 17.500 2.500 15zM15 12.500l2.500 2.500-2.500 2.500-2.500-2.500zM10 0l2.500 1.500-2.500 2-2.500-2zM10 16.500l2.500 2L10 20l-2.500-1.500zM0 8l3 2-3 2zM20 8l-3 2 3 2z"
              fill="#fff"
              stroke="#fff"
              strokeLinejoin="round"
            />
            <rect x=".75" y=".75" width="18.5" height="18.5" fill="none" stroke="#222" strokeWidth="1.3" />
          </Swatch>
          <Swatch label="Staal">
            <rect x=".75" y=".75" width="18.5" height="18.5" fill="#9db5d4" stroke="#000" strokeWidth="1.3" />
            <rect x="5" y="5" width="12" height="12" fill="#555" />
            <rect x="3.5" y="3.5" width="12" height="12" fill="#fff" stroke="#ddd" />
          </Swatch>
          <button aria-label="Onbepaald" className="flex h-[30px] w-[30px] items-center justify-center font-['DejaVu_Sans'] text-[24px] font-bold leading-none">?</button>
          <button aria-label="Vulregel even-oneven" className="ml-auto flex h-[29px] w-6 items-center justify-center border border-[#99d1ff] bg-[#cce8ff]">
            <svg width="15" height="15" viewBox="0 0 16 15">
              <path d={lobes} fill="#111" />
              <path d="M7 0h2l-.5 3.5C10.500 5 11 7 10.500 8.500c-.8 3-4.200 3-5 0C5 7 5.500 5 7.500 3.500z" fill="#cce8ff" />
            </svg>
          </button>
          <button aria-label="Vulregel niet nul" className="flex h-[29px] w-6 items-center justify-center">
            <svg width="15" height="15" viewBox="0 0 16 15"><path d={lobes} fill="#111" /></svg>
          </button>
        </div>
        <p className="mt-[7px] font-bold leading-[18px]">Geen opvulling</p>
      </div>
      <div className="mt-1 flex items-center">
        <div className="flex h-6 flex-1 items-center border border-r-0 border-[#adadb5] bg-white pl-[5px]">
          <label htmlFor="blur" className="flex-1">Vervagen (%)</label>
          <input id="blur" defaultValue="0,0" className="w-12 bg-transparent pr-1 text-right outline-none" />
        </div>
        <Spin dimDown />
      </div>
      <div className="mt-1 flex items-center">
        <div className="flex h-6 flex-1 items-center border border-r-0 border-[#adadb5] bg-white p-px pr-[2px]">
          <div className="flex h-5 flex-1 items-center border-b-2 border-r-2 border-black bg-[#b5c3cd] pl-1">
            <label htmlFor="opacity" className="flex-1">Ondoorzichtigheid (%)</label>
            <input id="opacity" defaultValue="100,0" className="w-12 bg-transparent text-right outline-none" />
          </div>
        </div>
        <Spin dimUp />
      </div>
    </div>
  </aside>
);

export default function App() {
  return (
    <div className="flex h-screen min-h-[600px] flex-col overflow-hidden border border-[#1883d7] bg-[#f0f0f0] font-['Noto_Sans','Open_Sans',sans-serif] text-[11px] text-black">
      <header className="flex h-[30px] shrink-0 items-center bg-white pl-2">
        <svg width="17" height="16" viewBox="0 0 17 16" aria-hidden="true">
          <path d="M8.500 0c1 0 7 6.500 8 7.500.5 1.500-3 2-4 3 0 1 2 1 2 2s-3 0-4 2c-1 1.500-3 1.500-4 0-1-1-3-.5-4-2 0-1 2-.5 2-1.500S.5 9.500.5 8z" fill="#111" />
          <path d="M8.500 1.500l3.500 3.500-1.500 1-1.500-1-1.500 1.500L6 5.500l-1 .5z" fill="#e8eef4" />
          <path d="M3 9l4 1.500M11 12h2" stroke="#aaa" />
        </svg>
        <h1 className="ml-1 flex-1">*Nieuw document 1 - Inkscape</h1>
        <button aria-label="Minimaliseren" className="flex h-full w-[46px] items-center justify-center"><svg width="10" height="10"><path d="M0 5.500h10" stroke="#000" /></svg></button>
        <button aria-label="Maximaliseren" className="flex h-full w-[46px] items-center justify-center"><svg width="10" height="10"><path d="M.5.5h9v9h-9z" stroke="#000" fill="none" /></svg></button>
        <button aria-label="Sluiten" className="flex h-full w-[46px] items-center justify-center"><svg width="10" height="10"><path d="M0 0l10 10M10 0L0 10" stroke="#000" /></svg></button>
      </header>

      <nav aria-label="Menu" className="flex h-[21px] shrink-0 items-end border-b border-[#d9d9d9] bg-white pl-px">
        {menus.map(([a, b, c]) => (
          <button key={a + b + c} className="px-[7px] leading-[18px]">
            {a}<u>{b}</u>{c}
          </button>
        ))}
      </nav>

      <div role="toolbar" aria-label="Knooppunten bewerken" className="flex h-8 shrink-0 items-center border-b border-[#d9d9d9] bg-white pl-[2px]">
        <Tool label="Knooppunt invoegen">{edit.add}</Tool>
        <button aria-label="Meer" className="flex w-6 items-center justify-center"><Tri big /></button>
        <Tool label="Knooppunt verwijderen">{edit.remove}</Tool>
        <VSep />
        <Tool label="Samenvoegen">{edit.join}</Tool>
        <Tool label="Verbreken">{edit.breakPath}</Tool>
        <VSep />
        <Tool label="Verbinden met segment">{edit.joinSeg}</Tool>
        <Tool label="Segment verwijderen">{edit.delSeg}</Tool>
        <VSep />
        <Tool label="Hoekig">{edit.cusp}</Tool>
        <Tool label="Afgevlakt">{edit.smooth}</Tool>
        <Tool label="Symmetrisch">{edit.symmetric}</Tool>
        <Tool label="Automatisch">{edit.auto}</Tool>
        <VSep />
        <Tool label="Rechte lijn">{edit.line}</Tool>
        <Tool label="Kromme">{edit.curve}</Tool>
        <VSep />
        <Tool label="Object naar pad">{edit.objToPath}</Tool>
        <Tool label="Lijn naar pad">{edit.strokeToPath}</Tool>
        <VSep />
        <label htmlFor="px" className="ml-2 w-[15px]">X:</label>
        <input id="px" defaultValue="222,857" className="h-5 w-[45px] border border-r-0 border-[#adadad] bg-white pl-[3px] outline-none" />
        <Spin />
        <label htmlFor="py" className="ml-[9px] w-[13px]">Y:</label>
        <input id="py" defaultValue="592,857" className="h-5 w-[45px] border border-r-0 border-[#adadad] bg-white pl-[3px] outline-none" />
        <Spin />
        <span className="relative ml-px flex h-5 w-[43px] border-2 border-[#adadad]">
          <select aria-label="Eenheid" className="w-full appearance-none bg-white pl-[2px] outline-none"><option>px</option></select>
          <span className="pointer-events-none absolute inset-y-0 right-0 flex w-[15px] items-center justify-center border-l border-[#adadad] bg-[#e1e1e1]"><Chevron d={DOWN} /></span>
        </span>
        <VSep />
        <Tool label="Volgende parameter">{edit.next}</Tool>
        <Tool label="Afsnijding bewerken">{edit.outline}</Tool>
        <Tool label="Masker bewerken">{edit.mask}</Tool>
        <VSep />
        <Tool label="Transformatiegrepen">{edit.transform}</Tool>
        <Tool label="Handvatten" on>{edit.handles}</Tool>
        <Tool label="Padomtrek" on>{edit.pathOutline}</Tool>
      </div>

      <main className="flex min-h-0 flex-1">
        <div role="toolbar" aria-label="Gereedschappen" className="flex w-9 shrink-0 flex-col border-r-2 border-[#f0f0f0] bg-white pl-[2px] pt-[2px]">
          {toolbox.map(([label, icon], i) => (
            <button key={label} aria-label={label} className={`flex h-[30px] w-[30px] shrink-0 items-center justify-center border ${i === 1 ? "border-[#99d1ff] bg-[#cce8ff]" : "border-transparent"}`}>
              {icon}
            </button>
          ))}
        </div>

        <div className="flex min-w-0 flex-1 flex-col">
          <div className="flex min-h-0 flex-1 border-t border-[#f0f0f0]">
            <Canvas />
            <div className="flex w-[27px] shrink-0 flex-col items-center pr-2 pt-px">
              <svg width="18" height="18" viewBox="0 0 18 18" fill="none" aria-hidden="true">
                <path d="M13 13l4 4" stroke="#555" strokeWidth="2" />
                <circle cx="8" cy="8" r="6.8" fill="#f6f6f6" stroke="#444" strokeWidth="1.2" />
                <path d="M5.5 5v6M10.500 5v6M8 6.500v1M8 9v1" stroke="#333" />
              </svg>
              <button aria-label="Omhoog" className="mt-[6px]"><Chevron d={UP} /></button>
              <div className="flex w-full flex-1 flex-col items-center">
                <span className="grow-[175]" />
                <span className="w-[15px] grow-[150] bg-[#cdcdcd]" />
                <span className="grow-[248]" />
              </div>
              <button aria-label="Omlaag" className="mb-1"><Chevron d={DOWN} /></button>
            </div>
          </div>
          <div className="flex h-5 items-center pl-[3px]">
            <button aria-label="Links"><Chevron d={LEFT} /></button>
            <div className="ml-[3px] flex flex-1">
              <span className="grow-[171]" />
              <span className="h-[15px] grow-[198] bg-[#cdcdcd]" />
              <span className="grow-[197]" />
            </div>
            <button aria-label="Rechts"><Chevron d={RIGHT} /></button>
            <button aria-label="Kleurbeheer" className="ml-[9px] mr-[10px]">
              <svg width="13" height="14" viewBox="0 0 13 14">
                <defs>
                  <linearGradient id="cm" x1="0" y1="0" x2="1" y2="1">
                    <stop stopColor="#2c9c3c" />
                    <stop offset=".5" stopColor="#7fb88c" />
                    <stop offset="1" stopColor="#c33" />
                  </linearGradient>
                </defs>
                <path d="M1 .5c4 1 8 6 11 9L4 13.500C1.500 11 0 3 1 .5z" fill="url(#cm)" />
                <path d="M2 10l2 3.500 3-1.500z" fill="#4040d0" />
              </svg>
            </button>
          </div>
        </div>

        <Panel />

        <div className="ml-[3px] flex bg-white">
          <div role="toolbar" aria-label="Opdrachten" className="flex w-[30px] flex-col items-center pt-[2px]">
            {commands.map((c, i) => (c ? <Tool key={i} label={c[0]}>{c[1]}</Tool> : <HSep key={i} />))}
            <button aria-label="Meer opdrachten" className="mt-[18px]">
              <svg width="9" height="8" viewBox="0 0 9 8" fill="none"><path d="M1 1l3 3-3 3M5 1l3 3-3 3" stroke="#7a7ab5" strokeWidth="1.3" /></svg>
            </button>
          </div>
          <div role="toolbar" aria-label="Kleven" className="flex w-[30px] flex-col items-start pl-[2px] pt-[2px]">
            {snaps.map((s, i) => (s ? <Tool key={i} label={s[0]} on={s[2]}>{s[1]}</Tool> : <span key={i} className="w-[26px]"><HSep /></span>))}
          </div>
        </div>
      </main>

      <div className="flex h-[23px] shrink-0 border-t border-[#a0a0a0] pl-px">
        <div className="flex h-5 min-w-0 flex-1 overflow-hidden border-b-2 border-t border-b-white border-t-black">
          <button aria-label="Geen kleur" className="w-[18px] shrink-0 bg-white">
            <svg width="18" height="17" viewBox="0 0 18 17"><path d="M.5.5l17 16M17.500.5L.5 16.500" stroke="#7a1414" strokeWidth="1.5" /></svg>
          </button>
          {swatches.map((c, i) => (
            <button key={i} aria-label={c} className="w-[17px] shrink-0" style={{ backgroundColor: c }} />
          ))}
        </div>
        <button aria-label="Palet kiezen" className="flex h-[13px] w-4 items-center justify-center">
          <svg width="4" height="7" viewBox="0 0 4 7"><path d="M4 0v7L0 3.500z" fill="#000" /></svg>
        </button>
      </div>
      <div className="flex h-[15px] shrink-0 items-center border-t border-white pl-1">
        <button aria-label="Palet links"><Chevron d={LEFT} dim /></button>
        <span className="ml-[5px] h-[13px] w-[133px] bg-[#cdcdcd]" />
        <button aria-label="Palet rechts" className="ml-auto mr-[18px]"><Chevron d={RIGHT} /></button>
      </div>

      <footer className="flex h-7 shrink-0 items-stretch">
        <div className="grid grid-cols-[44px_68px_12px] grid-rows-[14px_14px] pl-[2px] leading-[14px]">
          <span>Vulling:</span>
          <i className="pl-2 text-center">Geen</i>
          <span />
          <span>Lijn:</span>
          <span className="bg-black" />
          <span className="pl-[3px]">1</span>
        </div>
        <div className="flex items-center border-r border-[#a0a0a0] pr-[3px]">
          <label htmlFor="o" className="w-[14px]">O:</label>
          <input id="o" defaultValue="100" className="h-[21px] w-9 border border-r-0 border-[#adadad] bg-white pl-1 outline-none" />
          <Spin dimUp />
        </div>
        <button aria-label="Zichtbaarheid" className="ml-[7px]">
          <svg width="16" height="16" viewBox="0 0 16 16" fill="none">
            <path d="M1 8c3-4 10-5 14 0-4 5-11 4-14 0z" fill="#fff" stroke="#222" strokeWidth="1.2" />
            <circle cx="8" cy="8" r="3" fill="#222" />
            <path d="M3 4l1 2M6 2.500l.5 2M10 2.500l-.5 2M13 4l-1 2M4 13l1-1.500M12 13l-1-1.500" stroke="#222" />
          </svg>
        </button>
        <button aria-label="Vergrendeling" className="ml-[6px] mr-[5px]">
          <svg width="13" height="16" viewBox="0 0 13 16" fill="none">
            <path d="M3 5V3.500C4 0 10 1 10 4.500V7" stroke="#222" strokeWidth="1.5" />
            <rect x="1.500" y="7" width="9" height="7.500" fill="#f6e9a0" stroke="#333" />
            <circle cx="6" cy="10" r="1" fill="#222" />
            <path d="M6 10v2.500" stroke="#222" />
          </svg>
        </button>
        <span className="relative flex w-[77px] border border-[#adadad]">
          <select aria-label="Laag" className="w-full appearance-none bg-white pl-[3px] text-[10px] font-bold outline-none"><option>•Laag 1</option></select>
          <span className="pointer-events-none absolute inset-y-0 right-0 flex w-4 items-center justify-center border-l border-[#adadad] bg-[#e1e1e1]"><Chevron d={DOWN} /></span>
        </span>
        <p className="min-w-0 flex-1 self-center overflow-hidden whitespace-nowrap pl-[6px]">
          <b>1 van 6</b> knooppunten geselecteerd. Sleep om knooppunten te selecteren, klik voor deselectie
        </p>
        <div className="grid grid-cols-[12px_48px] grid-rows-[14px_14px] border-l border-[#a0a0a0] pl-[3px] leading-[14px]">
          <span>X:</span>
          <span className="text-right font-['Liberation_Mono'] text-[12px]">744,29</span>
          <span>Y:</span>
          <span className="text-right font-['Liberation_Mono'] text-[12px]">1141,43</span>
        </div>
        <div className="ml-[9px] flex items-center">
          <label htmlFor="z" className="w-3">Z:</label>
          <input id="z" defaultValue="70%" className="h-[21px] w-[45px] border border-r-0 border-[#adadad] bg-white pl-[9px] outline-none" />
          <Spin />
        </div>
        <svg width="20" height="12" viewBox="0 0 20 12" className="self-end" aria-hidden="true">
          <path d="M16 1h2v2h-2zM12 5h2v2h-2zM16 5h2v2h-2zM8 9h2v2H8zM12 9h2v2h-2zM16 9h2v2h-2z" fill="#bbb" />
        </svg>
      </footer>
    </div>
  );
}
